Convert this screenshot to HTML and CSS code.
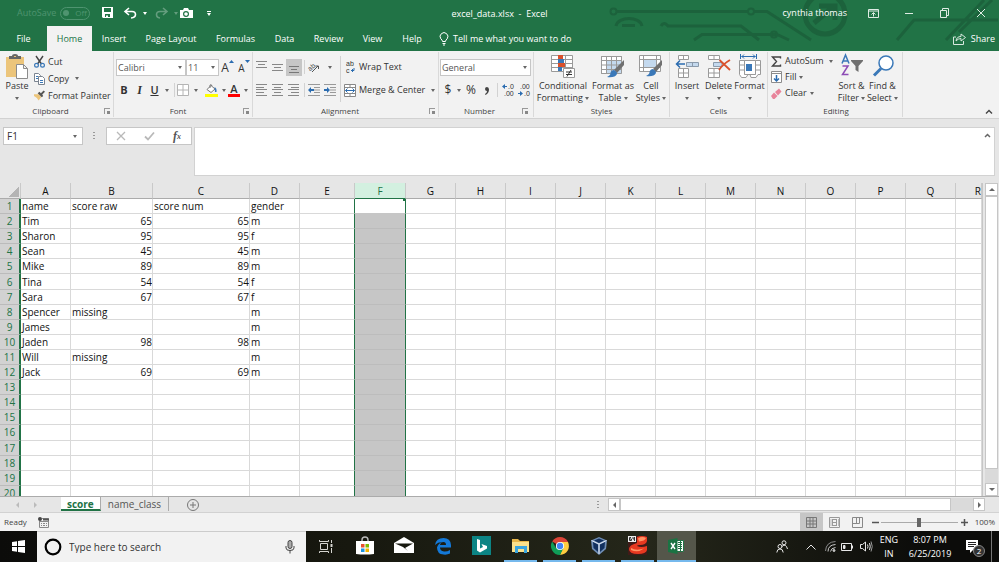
FILE: index.html
```html
<!DOCTYPE html>
<html lang="en">
<head>
<meta charset="utf-8">
<title>excel_data.xlsx - Excel</title>
<link rel="stylesheet" href="styles.css">
</head>
<body>
<div class="app">
  <header class="top">
    <svg class="circuit" width="390" height="42" viewBox="610 0 390 42" fill="none" stroke="#1a5c38" stroke-width="3">
      <circle cx="614.500" cy="11.500" r="3" stroke-width="2"/><path d="M618 11.500H749M755 11.500H768L812 40" />
      <circle cx="752" cy="11.500" r="3" stroke-width="2"/>
      <path d="M617 26C619 16 641 16 643 26M623 25.500H636"/>
      <path d="M662 26Q665 21 669 26H742L760 40M695 40L703 34.500H771L778 34.500L790 40"/>
      <circle cx="775" cy="34.500" r="3" stroke-width="2"/>
      <circle cx="826" cy="14" r="20" stroke-width="5"/>
      <path d="M815 23L834 7M820 6H836V20" stroke-width="5"/>
      <path d="M898 40L915 20H999M947 40L985 0M960 32L993 0"/>
    </svg>
    <div class="titlebar">
      <div class="quick">
        <span class="autosave">AutoSave</span>
        <button class="toggle" aria-label="AutoSave off"><i></i>Off</button>
        <button class="save" aria-label="Save"><svg width="12" height="12" viewBox="0 0 12 12"><path fill="#fff" fill-rule="evenodd" d="M0 0H11V11H1L0 10ZM2 1V5H9V1ZM3 7V10H4V8.500H6V10H8V7Z"/></svg></button>
        <button class="undo" aria-label="Undo"><svg width="13" height="12" viewBox="0 0 13 12" fill="none" stroke="#fff" stroke-width="1.600"><path d="M5 1L1 4.500L5 8M1.500 4.500H8Q11.500 4.500 11.500 7.500Q11.500 10.500 7 11"/></svg></button>
        <i class="caret light"></i>
        <button class="undo dim" aria-label="Redo"><svg width="13" height="12" viewBox="0 0 13 12" fill="none" stroke="#fff" stroke-width="1.600"><path d="M8 1L12 4.500L8 8M11.500 4.500H5Q1.500 4.500 1.500 7.500Q1.500 10.500 5 11"/></svg></button>
        <i class="caret light dim"></i>
        <button class="camera" aria-label="Camera"><svg width="13" height="11" viewBox="0 0 13 11"><path fill="#fff" d="M0 2H3L4 0H8L9 2H13V10H0Z"/><circle cx="6" cy="6" r="2.400" fill="#fff" stroke="#217346" stroke-width="1.200"/></svg></button>
        <button class="more" aria-label="Customize toolbar"><i class="caret light"></i></button>
      </div>
      <div class="title">excel_data.xlsx&nbsp; - &nbsp;Excel</div>
      <div class="window">
        <span>cynthia thomas</span>
        <button aria-label="Ribbon display options"><svg width="11" height="10" viewBox="0 0 11 10" fill="none" stroke="#dfece4"><path d="M.5 1.500H10.500V9.500H.5ZM.5 3H10.500M5.500 8.500V5M3.500 6.500L5.500 4.500L7.500 6.500"/></svg></button>
        <button aria-label="Minimize"><svg width="9" height="10" viewBox="0 0 9 10" stroke="#dfece4"><path d="M0 5.500H8"/></svg></button>
        <button aria-label="Restore"><svg width="10" height="10" viewBox="0 0 10 10" fill="none" stroke="#dfece4"><path d="M.5 2.500H6.500V9.500H.5ZM2.500 2V.5H8.500V7.500H7"/></svg></button>
        <button aria-label="Close"><svg width="10" height="10" viewBox="0 0 10 10" stroke="#dfece4"><path d="M1 1L9 9M9 1L1 9"/></svg></button>
      </div>
    </div>
    <nav class="tabs">
      <a href="#">File</a><a href="#" class="on">Home</a><a href="#">Insert</a><a href="#">Page Layout</a><a href="#">Formulas</a><a href="#">Data</a><a href="#">Review</a><a href="#">View</a><a href="#">Help</a>
      <button class="tell"><svg width="10" height="14" viewBox="0 0 10 14" fill="none" stroke="#fff"><path d="M3.500 9.500Q3.500 8 1.800 6.800A3.900 3.900 0 1 1 8.200 6.800Q6.500 8 6.500 9.500ZM3.500 11.500H6.500M4 13H6"/></svg>Tell me what you want to do</button>
      <button class="share"><svg width="13" height="13" viewBox="0 0 13 13" fill="none" stroke="#d9e9df"><path d="M3 5H.5V12.500H10.500V9M3 9Q3.500 4.500 8 4.500V2L12.500 5.500L8 9V6.500Q5 6.500 3 9Z"/></svg>Share</button>
    </nav>
  </header>

  <section class="ribbon">
    <div class="group clipboard">
      <div class="body">
        <button class="big"><svg width="24" height="26" viewBox="0 0 24 26"><path fill="#ecc57b" d="M1 3H19V23H1Z"/><path fill="#666" d="M4 2H7Q7 0 10 0Q13 0 13 2H16V5H4Z"/><path fill="#ecc57b" d="M9 2H11V3H9Z"/><path fill="#fff" stroke="#8c8c8c" d="M11.500 10.500H18.500L22.500 14.500V24.500H11.500ZM18.500 10.500V14.500H22.500"/></svg><span>Paste</span><i class="caret"></i></button>
        <div class="list">
          <button><svg width="11" height="12" viewBox="0 0 11 12" fill="none"><path stroke="#444" stroke-width="1.400" d="M2 0L7.500 8M9 0L3.500 8"/><circle cx="2.500" cy="9.300" r="1.900" stroke="#3a78b8" stroke-width="1.200"/><circle cx="8.500" cy="9.300" r="1.900" stroke="#3a78b8" stroke-width="1.200"/></svg>Cut</button>
          <button><svg width="11" height="12" viewBox="0 0 11 12" fill="#fff" stroke="#7b8490"><path d="M.5 .5H4.500L6.500 2.500V8.500H.5Z"/><path stroke="#3a78b8" d="M2 3.500H4M2 5.500H4"/><path d="M4.500 3.500H8.500L10.500 5.500V11.500H4.500Z"/><path stroke="#3a78b8" d="M6 7.500H9M6 9.500H9"/></svg>Copy<i class="caret"></i></button>
          <button><svg width="11" height="11" viewBox="0 0 12 11"><path fill="#ecc57b" d="M0 4L5 4L8 7L5 11Q4 8 0 6Z"/><path fill="#555" d="M4 3L6 1.500L7.500 3L10.500 0L12 1.500L9 4.500L10 6L8.500 7.500Z"/></svg>Format Painter</button>
        </div>
      </div>
      <footer><span>Clipboard</span><i class="launch"></i></footer>
    </div>

    <div class="group font">
      <div class="body rows">
        <div class="row r1">
          <label class="combo"><select aria-label="Font"><option>Calibri</option></select></label>
          <label class="combo"><select aria-label="Font size"><option>11</option></select></label>
          <button aria-label="Increase font size" class="grow">A<svg width="5" height="3" viewBox="0 0 5 3"><path fill="#2b6cb0" d="M0 3L2.500 0L5 3Z"/></svg></button>
          <button aria-label="Decrease font size" class="grow small">A<svg width="5" height="3" viewBox="0 0 5 3"><path fill="#2b6cb0" d="M0 0L2.500 3L5 0Z"/></svg></button>
        </div>
        <div class="row r2">
          <button class="b">B</button><button class="i">I</button><button class="u">U</button><i class="caret"></i><i class="sep"></i>
          <button aria-label="Borders"><svg width="12" height="12" viewBox="0 0 12 12" fill="#fff" stroke="#b4b4b4"><path d="M.5 .5H11.500V11.500H.5ZM6 .5V11.500M.5 6H11.500"/></svg></button><i class="caret"></i>
          <button aria-label="Fill color"><svg width="13" height="13" viewBox="0 0 13 13"><path fill="#fff" stroke="#777" d="M2 5.500L6 1.500L10 5L6 8.500Z"/><path stroke="#777" fill="none" d="M5 4V1Q6.500 0 7 2"/><path fill="#3a78b8" d="M9.500 3Q12 4 11.500 8L10 8Z"/><path fill="#ff0" d="M0 10H13V13H0Z"/></svg></button><i class="caret"></i>
          <button aria-label="Font color" class="fc">A</button><i class="caret"></i>
        </div>
      </div>
      <footer><span>Font</span><i class="launch"></i></footer>
    </div>

    <div class="group align">
      <div class="body">
        <div class="aligngrid">
          <button aria-label="Top align"><svg width="12" height="12" viewBox="0 0 12 12" stroke="#888"><path d="M0 .5H11M2 3.500H9M0 6.500H11"/></svg></button>
          <button aria-label="Middle align"><svg width="12" height="12" viewBox="0 0 12 12" stroke="#888"><path d="M0 3.500H11M2 6.500H9M0 9.500H11"/></svg></button>
          <button aria-label="Bottom align" class="sel"><svg width="12" height="12" viewBox="0 0 12 12" stroke="#777"><path d="M1 5.500H11M3 8.500H9M1 11.500H11"/></svg></button>
          <i class="sep"></i>
          <button aria-label="Orientation"><svg width="12" height="12" viewBox="0 0 12 12"><text x="0" y="9" font-size="7" font-family="Liberation Sans" fill="#444" transform="rotate(-40 3 7)">ab</text><path d="M4 11L10 5M7.500 5H10.500V8" fill="none" stroke="#555"/></svg></button>
          <i class="caret"></i>
          <button aria-label="Align left"><svg width="12" height="12" viewBox="0 0 12 12" stroke="#888"><path d="M0 .5H11M0 3.500H8M0 5.500H11M0 8.500H8M0 11.500H11"/></svg></button>
          <button aria-label="Center"><svg width="12" height="12" viewBox="0 0 12 12" stroke="#888"><path d="M0 .5H11M2 3.500H9M0 5.500H11M2 8.500H9M0 11.500H11"/></svg></button>
          <button aria-label="Align right"><svg width="12" height="12" viewBox="0 0 12 12" stroke="#888"><path d="M0 .5H11M3 3.500H11M0 5.500H11M3 8.500H11M0 11.500H11"/></svg></button>
          <i class="sep"></i>
          <button aria-label="Decrease indent"><svg width="12" height="12" viewBox="0 0 12 12"><path stroke="#999" d="M0 .5H12M6 3.500H12M6 6H12M6 8.500H12M0 11.500H12"/><path fill="#2b6cb0" d="M0 6L3 3V5H6V7H3V9Z"/></svg></button>
          <button aria-label="Increase indent"><svg width="12" height="12" viewBox="0 0 12 12"><path stroke="#999" d="M0 .5H12M6 3.500H12M6 6H12M6 8.500H12M0 11.500H12"/><path fill="#2b6cb0" d="M6 6L3 3V5H0V7H3V9Z"/></svg></button>
        </div>
        <i class="sep tall"></i>
        <div class="wraps">
          <button><svg width="12" height="14" viewBox="0 0 12 14"><text x="2" y="6" font-size="7" font-family="Liberation Sans" fill="#333">ab</text><text x="2" y="13" font-size="7" font-family="Liberation Sans" fill="#333">c</text><path fill="none" stroke="#2b6cb0" d="M10 8V10.500H7M9 9L7.500 10.500L9 12"/></svg>Wrap Text</button>
          <button><svg width="12" height="13" viewBox="0 0 12 13" fill="none" stroke="#888"><path fill="#fff" d="M.5 .5H11.500V12.500H.5ZM.5 3.500H11.500M.5 9.500H11.500M6 .5V3.500M6 9.500V12.500"/><path stroke="#2b6cb0" d="M1.500 6.500H10.500M3.500 4.500L1.500 6.500L3.500 8.500M8.500 4.500L10.500 6.500L8.500 8.500"/></svg>Merge &amp; Center<i class="caret"></i></button>
        </div>
      </div>
      <footer><span>Alignment</span><i class="launch"></i></footer>
    </div>

    <div class="group number">
      <div class="body rows">
        <div class="row"><label class="combo"><select aria-label="Number format"><option>General</option></select></label></div>
        <div class="row nr">
          <button class="sym">$</button><i class="caret"></i><button class="sym">%</button><button aria-label="Comma style"><svg width="6" height="9" viewBox="0 0 6 9"><path fill="#444" d="M1 8Q3 7 3 5Q1 5 1 3Q1 1 3 1Q5 1 5 3.500Q5 7 1.500 9Z"/></svg></button><i class="sep"></i>
          <button aria-label="Increase decimal"><svg width="13" height="14" viewBox="0 0 13 14"><path fill="#2b6cb0" d="M0 3.500L3 1V3H5V4H3V6Z"/><text x="6" y="6" font-size="7" font-family="Liberation Sans" fill="#333">.0</text><text x="2" y="13" font-size="7" font-family="Liberation Sans" fill="#333">.00</text></svg></button>
          <button aria-label="Decrease decimal"><svg width="13" height="14" viewBox="0 0 13 14"><path fill="#2b6cb0" d="M5 10.500L2 8V10H0V11H2V13Z"/><text x="2" y="6" font-size="7" font-family="Liberation Sans" fill="#333">.00</text><text x="6" y="13" font-size="7" font-family="Liberation Sans" fill="#333">.0</text></svg></button>
        </div>
      </div>
      <footer><span>Number</span><i class="launch"></i></footer>
    </div>

    <div class="group styles">
      <div class="body">
        <button class="big"><svg width="24" height="26" viewBox="0 0 24 26"><path fill="#fff" stroke="#9a9a9a" d="M.5 1.500H21.500V17.500H.5ZM.5 5.500H21.500M.5 9.500H21.500M.5 13.500H21.500M7.500 1.500V17.500M14.500 1.500V17.500"/><path fill="#d9512c" d="M7 1H12V5H7ZM7 9H14V13H7Z"/><path fill="#3a78b8" d="M7 5H13V9H7ZM7 13H11V17H7Z"/><path fill="#fff" stroke="#9a9a9a" d="M12.500 14.500H23.500V23.500H12.500Z"/><path stroke="#333" d="M15 18H21M15 20.500H21M20 16L16 22.500"/></svg><span>Conditional</span><span>Formatting <i class="caret"></i></span></button>
        <button class="big"><svg width="24" height="26" viewBox="0 0 24 26"><path fill="#fff" stroke="#9a9a9a" d="M.5 2.500H20.500V19.500H.5Z"/><path fill="#c4d9ee" d="M5 7H21V20H5Z"/><path fill="none" stroke="#9a9a9a" d="M.5 2.500H20.500V19.500H.5ZM.5 6.500H20.500M.5 11H20.500M.5 15.500H20.500M5.500 2.500V19.500M10.500 2.500V19.500M15.500 2.500V19.500"/><path fill="#707070" d="M23 6V11L16 19L13 16Z"/><path fill="#3a78b8" d="M12.500 16Q16 17 16 20Q14 24 6 23Q10 21 9.500 18.500Q10.500 16 12.500 16Z"/></svg><span>Format as</span><span>Table <i class="caret"></i></span></button>
        <button class="big"><svg width="24" height="26" viewBox="0 0 24 26"><path fill="#fff" stroke="#9a9a9a" d="M.5 1.500H21.500V17.500H.5ZM.5 5.500H21.500M.5 13.500H21.500M4.500 1.500V17.500M17.500 1.500V17.500"/><path fill="#c4d9ee" d="M5 6H17V13H5Z"/><path fill="#707070" d="M23 6V11L17 18L14 15Z"/><path fill="#3a78b8" d="M13.500 15Q17 16 17 19Q15 23 7 22Q11 20 10.500 17.500Q11.500 15 13.500 15Z"/></svg><span>Cell</span><span>Styles <i class="caret"></i></span></button>
      </div>
      <footer><span>Styles</span></footer>
    </div>

    <div class="group cells">
      <div class="body">
        <button class="big"><svg width="24" height="26" viewBox="0 0 24 26"><path fill="#fff" stroke="#9a9a9a" d="M3.500 1.500H13.500V5.500H3.500ZM8.500 1.500V5.500M3.500 14.500H13.500V23.500H3.500ZM8.500 14.500V23.500M3.500 19H13.500"/><path fill="#c4d9ee" stroke="#8a9aab" d="M11.500 8.500H23.500V12.500H11.500ZM17.500 8.500V12.500"/><path fill="none" stroke="#2b6cb0" stroke-width="1.500" d="M10 10H2M5 6.500L1.500 10L5 13.500"/></svg><span>Insert</span><i class="caret"></i></button>
        <button class="big"><svg width="24" height="26" viewBox="0 0 24 26"><path fill="#fff" stroke="#9a9a9a" d="M1.500 1.500H12.500V5.500H1.500ZM7 1.500V5.500M1.500 14.500H12.500V23.500H1.500ZM7 14.500V23.500M1.500 19H12.500"/><path fill="#c4d9ee" stroke="#8a9aab" d="M6.500 8.500H15V12.500H6.500Z"/><path fill="none" stroke="#d9512c" stroke-width="1.800" d="M12.500 6L23 16M23 6Q16 10 12 16"/></svg><span>Delete</span><i class="caret"></i></button>
        <button class="big"><svg width="24" height="26" viewBox="0 0 24 26"><path fill="#fff" stroke="#9a9a9a" d="M1.500 6.500H22.500V20.500H20L18 23.500H13L12 20.500H10L8 23.500H3.500L1.500 20.500ZM1.500 11H22.500M1.500 16H22.500M6.500 6.500V20.500M17.500 6.500V20.500"/><path fill="#fff" stroke="#9a9a9a" d="M6.500 6.500H17.500V20.500H6.500Z"/><path fill="#3a78b8" d="M8 10H14V17H8Z"/><path fill="none" stroke="#2b6cb0" d="M2.500 0V5M18.500 0V5M3.500 2.500H17.500M6 .5L4 2.500L6 4.500M15 .5L17 2.500L15 4.500"/></svg><span>Format</span><i class="caret"></i></button>
      </div>
      <footer><span>Cells</span></footer>
    </div>

    <div class="group editing">
      <div class="body">
        <div class="list">
          <button><svg width="11" height="11" viewBox="0 0 11 11" fill="none" stroke="#444" stroke-width="1.400"><path d="M9.500 2.500V1H1.500L5.500 5.500L1.500 10H9.500V8.500"/></svg>AutoSum<i class="caret far"></i></button>
          <button><svg width="11" height="12" viewBox="0 0 11 12"><path fill="#fff" stroke="#8c8c8c" d="M.5 .5H10.500V11.500H.5ZM.5 2.500H10.500"/><path fill="none" stroke="#2b6cb0" stroke-width="1.500" d="M5.500 4V10M3 7.500L5.500 10L8 7.500"/></svg>Fill<i class="caret"></i></button>
          <button><svg width="11" height="11" viewBox="0 0 11 11"><path fill="#e8839a" d="M0 8L3 4.500L6.500 8L3.500 11H2Z"/><path fill="#e8839a" d="M4 4L8 .5L10.500 3.500L7 7.500Z"/></svg>Clear<i class="caret"></i></button>
        </div>
        <button class="big"><svg width="24" height="26" viewBox="0 0 24 26" fill="none"><path stroke="#3a78b8" stroke-width="1.500" d="M2 9.500L5.500 1L9 9.500M3 7H8"/><path stroke="#8d4bb5" stroke-width="1.500" d="M2.500 12H8L2.500 20.500H8.500"/><path fill="#707070" d="M11 6H23V7L18.500 12V18L15.500 16V12L11 7Z"/></svg><span>Sort &amp;</span><span>Filter <i class="caret"></i></span></button>
        <button class="big"><svg width="24" height="26" viewBox="0 0 24 26" fill="none" stroke="#3a78b8"><circle cx="15" cy="9" r="7" fill="#fff" stroke-width="1.500"/><path stroke-width="3" d="M10 14.500L3 21.500"/></svg><span>Find &amp;</span><span>Select <i class="caret"></i></span></button>
      </div>
      <footer><span>Editing</span></footer>
    </div>
    <button class="collapse" aria-label="Collapse ribbon"><svg width="8" height="5" viewBox="0 0 8 5" fill="none" stroke="#444" stroke-width="1.400"><path d="M1 4.500L4 1.500L7 4.500"/></svg></button>
  </section>

  <section class="formula">
    <label class="namebox"><input value="F1" aria-label="Name box"><i class="caret"></i></label>
    <i class="dots"></i>
    <div class="fx">
      <button aria-label="Cancel"><svg width="10" height="10" viewBox="0 0 10 10" stroke="#b9b9b9" stroke-width="1.300"><path d="M1 1L9 9M9 1L1 9"/></svg></button>
      <button aria-label="Enter"><svg width="11" height="10" viewBox="0 0 11 10" fill="none" stroke="#b9b9b9" stroke-width="1.800"><path d="M1 5.500L4 8.500L10 1.500"/></svg></button>
      <button class="fn" aria-label="Insert function">f<sub>x</sub></button>
    </div>
    <div class="entry"><textarea aria-label="Formula"></textarea><svg width="7" height="5" viewBox="0 0 7 5" fill="none" stroke="#666" stroke-width="1.500"><path d="M1 4L3.500 1.500L6 4"/></svg></div>
  </section>

  <main class="sheet">
    <div class="gridwrap"><table id="grid"></table></div>
    <div class="vscroll">
      <button aria-label="Scroll up"><i class="tri up"></i></button><div class="thumb"></div><div class="track"></div><button aria-label="Scroll down"><i class="tri down"></i></button>
    </div>
  </main>

  <div class="sheetbar">
    <button class="nav" aria-label="Previous sheet"><i class="tri left pale"></i></button><button class="nav" aria-label="Next sheet"><i class="tri right pale"></i></button>
    <a href="#" class="sheettab on">score</a><a href="#" class="sheettab">name_class</a>
    <button class="add" aria-label="New sheet"><svg width="12" height="12" viewBox="0 0 12 12" fill="none" stroke="#777"><circle cx="6" cy="6" r="5.500"/><path d="M3 6H9M6 3V9"/></svg></button>
    <i class="dots"></i>
    <div class="hscroll"><button aria-label="Scroll left"><i class="tri left"></i></button><div class="thumb"></div><div class="track"></div><button aria-label="Scroll right"><i class="tri right"></i></button></div>
  </div>

  <div class="status">
    <span class="ready">Ready</span>
    <svg width="11" height="11" viewBox="0 0 11 11"><path fill="none" stroke="#888" d="M1.500 4V10.500H10.500V1.500H4M1.500 4.500H10.500M3 6.500H9M3 8.500H9"/><path stroke="#f2f2f2" d="M4.500 5V10M7.500 5V10"/><path stroke="#555" stroke-width="2" d="M5 2.500H11"/><circle cx="2" cy="2" r="2" fill="#444"/></svg>
    <div class="views">
      <button class="sel" aria-label="Normal"><svg width="11" height="11" viewBox="0 0 11 11" fill="none" stroke="#777"><path d="M.5 .5H10.500V10.500H.5ZM.5 4H10.500M.5 7H10.500M4 .5V10.500M7 .5V10.500"/></svg></button>
      <button aria-label="Page layout"><svg width="11" height="11" viewBox="0 0 11 11" fill="none" stroke="#999"><path d="M.5 .5H10.500V10.500H.5ZM3.500 2V9M7.500 2V9M4 2.500H7M4 5.500H7M4 8.500H7"/><path stroke="#bbb" d="M2 2V9M9.500 2V9"/></svg></button>
      <button aria-label="Page break preview"><svg width="11" height="11" viewBox="0 0 11 11" fill="none" stroke="#888"><path d="M.5 .5H10.500V10.500H.5ZM.5 6.500H7.500V.5M4.500 .5V6.500"/></svg></button>
    </div>
    <button class="zoom" aria-label="Zoom out"><svg width="7" height="7" viewBox="0 0 7 7" stroke="#555" stroke-width="1.500"><path d="M0 3.500H7"/></svg></button>
    <input type="range" aria-label="Zoom" min="0" max="100" value="50">
    <button class="zoom" aria-label="Zoom in"><svg width="7" height="7" viewBox="0 0 7 7" stroke="#555" stroke-width="1.500"><path d="M0 3.500H7M3.500 0V7"/></svg></button>
    <span class="pct">100%</span>
  </div>

  <footer class="taskbar">
    <button class="start" aria-label="Start"><svg width="13" height="13" viewBox="0 0 13 13" fill="#fff"><path d="M0 2L5 1.200V6H0ZM6 1L13 0V6H6ZM0 7H5V11.800L0 11ZM6 7H13V13L6 12Z"/></svg></button>
    <label class="search">
      <svg width="18" height="18" viewBox="0 0 18 18" fill="none" stroke="#000" stroke-width="2.200"><circle cx="9" cy="9" r="7.300"/></svg>
      <input placeholder="Type here to search" aria-label="Search">
      <svg width="10" height="14" viewBox="0 0 10 14" fill="none" stroke="#444"><rect x="3" y=".5" width="4" height="8" rx="2" fill="#aaa"/><path d="M1 6V8Q1 10.500 5 10.500Q9 10.500 9 8V6M5 10.500V13.500"/></svg>
    </label>
    <div class="apps">
      <button aria-label="Task view"><svg width="14" height="14" viewBox="0 0 14 14" fill="none" stroke="#d5d5d0"><path d="M1.500 4.500H8.500V10.500H1.500ZM.5 1V2.500H9.500V1M.5 14V12.500H9.500V14M12.500 1V4M12.500 9V14"/><path stroke-width="2" d="M12.500 5V8"/></svg></button>
      <button aria-label="Store"><svg width="20" height="20" viewBox="0 0 20 20"><path fill="none" stroke="#bbb" stroke-width="1.400" d="M7 7V4Q7 1 10 1Q13 1 13 4V7"/><path fill="#fff" d="M1 5H19V18Q10 19 1 18Z"/><path fill="#e8502e" d="M6 8H9.500V11.500H6Z"/><path fill="#7fba00" d="M10.500 8H14V11.500H10.500Z"/><path fill="#1c94e0" d="M6 12.500H9.500V16H6Z"/><path fill="#f5b400" d="M10.500 12.500H14V16H10.500Z"/></svg></button>
      <button aria-label="Mail"><svg width="20" height="20" viewBox="0 0 20 20"><path fill="#fff" d="M0 7L10 1L20 7V17H0Z"/><path fill="#17180f" d="M1 7.500L19 7.500L11 12L14 15L9 11Z"/></svg></button>
      <button aria-label="Edge"><svg width="18" height="18" viewBox="0 0 18 18"><path fill="#1479d8" d="M1 8Q2 1 9.500 1Q16.500 1 17 8V10.500H6Q6 14 10 14.500Q13 14.800 16 13V16.500Q13 18 9.500 17.500Q3 17 3 10.500Q4 6.500 8 5Q4 5 1 8ZM6 8H12Q12 5 9.500 5Q6.500 5 6 8Z"/></svg></button>
      <button aria-label="Bing"><svg width="19" height="19" viewBox="0 0 19 19"><path fill="#0c8484" d="M0 0H19V19H0Z"/><path fill="#fff" d="M5 3L8 4V12.500L11 11L9.500 8L15 10V12.500L8 16.500L5 14.500Z"/></svg></button>
      <button class="run" aria-label="File Explorer"><svg width="18" height="16" viewBox="0 0 18 16"><path fill="#e8b64a" d="M0 1H6L8 3H17V14H0Z"/><path fill="#fbe08b" d="M0 4H17V14H0Z"/><path fill="#3aa5de" d="M3 8H15V15H12V11H6V15H3Z"/></svg></button>
      <button class="run" aria-label="Chrome"><svg width="18" height="18" viewBox="0 0 18 18"><path fill="#db4437" d="M9 9L1.200 4.500A9 9 0 0 1 16.800 4.500L17 5Z"/><path fill="#ffcd40" d="M9 5H17A9 9 0 0 1 9 18L12 10Z"/><path fill="#0f9d58" d="M1.200 4.500A9 9 0 0 0 9 18L12.500 11L5 11Z"/><circle cx="9" cy="9" r="4.100" fill="#fff"/><circle cx="9" cy="9" r="3.200" fill="#4285f4"/></svg></button>
      <button class="run" aria-label="VirtualBox"><svg width="18" height="18" viewBox="0 0 18 18"><path fill="#6f8db5" d="M9 0L17 3.500L16 12L9 18L2 12L1 3.500Z"/><path fill="#12305e" d="M3 5L8 7.500V15L3.500 11ZM15 5L10 7.500V15L14.500 11ZM9 1.500L14 3.500L9 6L4 3.500Z"/><path fill="none" stroke="#e4ebf5" d="M1.500 3.500L9 7L16.500 3.500M9 7V17"/></svg></button>
      <button class="run" aria-label="Terminal"><svg width="19" height="19" viewBox="0 0 19 19"><path fill="#401b18" d="M0 0H19V19H0Z"/><path fill="#e73920" d="M9 1Q14 -1 19 1V5Q18 9 12 9Q9 9 9 10Q13 12 19 10V14Q18 18 10 18Q1 18 1 13Q1 9 9 7Z"/><path fill="#ff9364" d="M10 2.500Q14 0 18 2Q17 5 11 5.500ZM3 12Q8 15 16 12.500Q10 17 3 14Z"/><path fill="#eee" d="M0 0H8V6H0Z"/><path stroke="#333" fill="none" d="M3 1.500H1.500V4.500H3.500V3H2M5 1V3H7M6.500 1V5"/></svg></button>
      <button class="run active" aria-label="Excel"><svg width="17" height="16" viewBox="0 0 17 16"><path fill="#fff" stroke="#217346" d="M8.500 2.500H15.500V13.500H8.500Z"/><path stroke="#217346" d="M10 4.500H14M10 6.500H14M10 8.500H14M10 10.500H14M12.500 3V13"/><path fill="#1a7343" d="M0 2L9.500 0V16L0 14Z"/><path stroke="#fff" stroke-width="1.400" d="M3 5L7 11M7 5L3 11"/></svg></button>
    </div>
    <div class="tray">
      <button aria-label="People"><svg width="12" height="13" viewBox="0 0 12 13" fill="none" stroke="#e8e8e8"><circle cx="8" cy="2.800" r="2"/><path d="M5.500 7Q8 3.500 10.500 6.500L11.500 9"/><circle cx="4" cy="6.500" r="2"/><path d="M.8 12.500Q1 9 4 9Q7 9 7.200 12.500"/></svg></button>
      <button aria-label="Show hidden icons"><svg width="10" height="6" viewBox="0 0 10 6" fill="none" stroke="#e8e8e8"><path d="M.5 5.500L5 1L9.500 5.500"/></svg></button>
      <button aria-label="Network"><svg width="11" height="11" viewBox="0 0 11 11" fill="none" stroke="#ccc"><path stroke="#888" d="M.5 10Q1 1 10.500 .5"/><path d="M3 10.500Q3 4 10.500 3.500M5.500 10.500Q6 7 10.500 6.500"/><circle cx="9" cy="9.500" r="1" fill="#ccc"/></svg></button>
      <button aria-label="Battery"><svg width="12" height="8" viewBox="0 0 12 8" fill="none" stroke="#e8e8e8"><path d="M.5 .5H10.500V7.500H.5ZM11.500 2.500V5.500"/><path fill="#e8e8e8" d="M2.500 2.500H4V5.500H2.500Z"/></svg></button>
      <button aria-label="Volume"><svg width="13" height="11" viewBox="0 0 13 11" fill="none" stroke="#e8e8e8"><path d="M.5 3.500H2.500L5.500 1V10L2.500 7.500H.5Z"/><path d="M7.500 3.500Q8.500 5.500 7.500 7.500M9.500 2Q11 5.500 9.500 9"/><path stroke="#999" d="M11 .5Q13.500 5.500 11 10.500"/></svg></button>
      <div class="two lang"><span>ENG</span><span>IN</span></div>
      <div class="two clock"><span>8:07 PM</span><span>6/25/2019</span></div>
      <button class="note" aria-label="Notifications"><svg width="13" height="13" viewBox="0 0 13 13"><path fill="#fff" d="M0 0H12V10H7L4 13V10H0Z"/><path stroke="#222" d="M2 2.500H10M2 4.500H10M2 6.500H8"/></svg><b>2</b></button>
      <i class="peek"></i>
    </div>
  </footer>
</div>
<script src="grid.js"></script>
</body>
</html>
```
FILE: grid.js
```js
const columns = "ABCDEFGHIJKLMNOPQR".split("");
const data = [
  ["name", "score raw", "score num", "gender"],
  ["Tim", 65, 65, "m"], ["Sharon", 95, 95, "f"], ["Sean", 45, 45, "m"],
  ["Mike", 89, 89, "m"], ["Tina", 54, 54, "f"], ["Sara", 67, 67, "f"],
  ["Spencer", "missing", "", "m"], ["James", "", "", "m"], ["Jaden", 98, 98, "m"],
  ["Will", "missing", "", "m"], ["Jack", 69, 69, "m"]
];
const selected = 5;
const cls = (i) => (i === selected ? "picked" : i === selected - 1 ? "before" : "");
let html = "<colgroup><col class='rh'>" + columns.map((c) => `<col class="c${c}">`).join("") + "</colgroup>";
html += "<thead><tr><th class='corner'></th>" + columns.map((c, i) => `<th class="${cls(i)}">${c}</th>`).join("") + "</tr></thead><tbody>";
for (let r = 0; r < 20; r++) {
  html += `<tr><th>${r + 1}</th>` + columns.map((c, i) => {
    const v = (data[r] || [])[i] ?? "";
    return `<td class="${cls(i)}${typeof v === "number" ? " num" : ""}">${v}</td>`;
  }).join("") + "</tr>";
}
document.getElementById("grid").innerHTML = html + "</tbody>";
```
FILE: styles.css
```css
* { box-sizing: border-box; }
html, body { margin: 0; height: 100%; }
body { font: 9px/12px "Open Sans", "Noto Sans", sans-serif; color: #333; background: #e6e6e6; overflow: hidden; }
button { font: inherit; color: inherit; background: none; border: 0; padding: 0; margin: 0; display: flex; align-items: center; justify-content: center; white-space: nowrap; }
a { color: inherit; text-decoration: none; }
input, select, textarea { font: inherit; color: inherit; margin: 0; border-radius: 0; outline: 0; }
svg { display: block; flex: none; overflow: visible; }
i { font-style: normal; flex: none; }
.app { height: 100vh; min-height: 500px; display: flex; flex-direction: column; }

.caret { display: inline-block; width: 0; height: 0; border: 2px solid transparent; border-top: 3px solid #666; border-bottom: 0; vertical-align: middle; justify-self: center; align-self: center; }
.caret.light { border-top-color: #fff; }
.dim { opacity: .3; }
.sep { width: 1px; height: 14px; background: #d2d2d2; align-self: center; justify-self: center; }

.top { position: relative; background: #217346; color: #fff; flex: none; }
.circuit { position: absolute; right: 0; top: 0; opacity: .7; overflow: hidden; }
.titlebar { position: relative; height: 26px; display: grid; grid-template-columns: 1fr auto 1fr; align-items: center; }
.quick { display: flex; align-items: center; padding-left: 17px; }
.autosave { width: 43px; color: #4f9470; }
.toggle { width: 30px; height: 13px; border: 1px solid #4f9470; border-radius: 7px; color: #4f9470; font-size: 8px; gap: 6px; margin-right: 12px; }
.toggle i { width: 6px; height: 6px; border-radius: 3px; background: #4f9470; }
.save { margin-right: 10px; }
.undo { margin-right: 6px; }
.quick > .caret { margin-right: 8px; }
.camera { margin-left: -6px; }
.more { margin-left: 14px; border-top: 1px solid #fff; padding-top: 1px; }
.title { padding-top: 1px; }
.window { display: flex; align-items: center; justify-content: flex-end; }
.window span { margin-right: 8px; }
.window button { width: 36px; height: 26px; }
.tabs { position: relative; display: grid; height: 25px; grid-template-columns: 47px 45px 44px 70px 59px 39px 49px 39px 40px auto 1fr; }
.tabs a { display: flex; align-items: center; justify-content: center; white-space: nowrap; }
.tabs .on { background: #f2f2f2; color: #217346; }
.tell { gap: 4px; padding-left: 7px; }
.share { gap: 5px; justify-self: end; padding-right: 4px; }

.ribbon { display: flex; background: #f2f2f2; height: 68px; flex: none; border-bottom: 1px solid #d2d2d2; padding-top: 1px; }
.group { display: flex; flex-direction: column; border-right: 1px solid #d9d9d9; flex: none; margin-bottom: 1px; }
.body { flex: 1; display: flex; align-items: flex-start; }
.group footer { display: flex; align-items: center; height: 12px; font-size: 8px; color: #444; }
.group footer span { flex: 1; text-align: center; }
.launch { width: 6px; height: 6px; border-left: 1px solid #999; border-top: 1px solid #999; margin: 0 3px; background: linear-gradient(#888, #888) 100% 100% / 3px 3px no-repeat; }
.big { flex-direction: column; justify-content: flex-start; padding-top: 2px; }
.big > .caret { margin-top: 5px; }
.list button { justify-content: flex-start; gap: 3px; }
.clipboard { width: 114px; }
.clipboard .big { width: 34px; }
.clipboard .list { padding-top: 1px; }
.clipboard .list button { height: 17px; }
.clipboard .list .caret { margin-left: 3px; }
.font { width: 139px; padding-left: 2px; }
.rows { flex-direction: column; padding-top: 7px; gap: 7px; align-items: stretch; }
.row { display: grid; height: 16px; align-items: center; }
.r1 { grid-template-columns: 70px 33px 17px 16px; }
.r2 { grid-template-columns: 16px 15px 15px 10px 4px 14px 12px 18px 7px 14px 9px; }
.combo { position: relative; display: block; height: 17px; }
.combo select { appearance: none; width: 100%; height: 17px; border: 1px solid #c6c6c6; background: #fff; padding: 0 1px; color: #555; display: block; }
.combo::after { content: ""; position: absolute; right: 4px; top: 7px; border: 2px solid transparent; border-top: 3px solid #666; border-bottom: 0; }
.grow { font-size: 12px; align-items: flex-start; line-height: 16px; }
.grow.small { font-size: 10px; }
.b { font-weight: 700; font-size: 11px; }
.i { font: italic 700 12px "Liberation Serif", serif; }
.u { font-weight: 600; font-size: 11px; text-decoration: underline; }
.r2 .fc { font-size: 11px; font-weight: 600; line-height: 10px; border-bottom: 3px solid #f00; height: 13px; width: 12px; justify-self: center; }
.align { width: 186px; padding-left: 1px; }
.aligngrid { display: grid; grid-template-columns: 16px 16px 16px 4px 16px 16px; grid-auto-rows: 16px; row-gap: 7px; padding-top: 7px; }
.aligngrid button, .aligngrid .caret { align-self: center; }
.aligngrid .sel { background: #c6c6c6; height: 17px; }
.sep.tall { height: 46px; margin: 4px 3px 0 2px; align-self: flex-start; }
.wraps { padding-top: 7px; }
.wraps button { height: 16px; gap: 3px; margin-bottom: 7px; }
.wraps .caret { margin-left: 3px; }
.number { width: 95px; padding: 0 2px 0 1px; }
.nr { grid-template-columns: 16px 6px 18px 14px 6px 16px 16px; }
.sym { font-size: 12px; }
.styles { width: 136px; }
.styles .body { display: grid; grid-template-columns: 58px 42px 34px; }
.cells { width: 98px; }
.cells .body { display: grid; grid-template-columns: 34px 29px 33px; }
.editing { width: 135px; padding-left: 3px; padding-right: 1px; }
.editing .list { padding-top: 1px; width: 65px; }
.editing .list button { height: 16px; }
.editing .far { margin-left: 2px; }
.editing .big { width: 31px; }
.collapse { margin-left: auto; align-self: flex-end; padding: 0 6px 4px 0; }

.formula { display: flex; align-items: flex-start; padding: 8px 4px 8px 3px; height: 64px; flex: none; }
.namebox { display: flex; width: 80px; height: 18px; background: #fff; border: 1px solid #c6c6c6; padding-right: 5px; }
.namebox input { border: 0; width: 100%; min-width: 0; padding: 0 3px; background: none; font-size: 10px; }
.dots { width: 2px; height: 9px; background: repeating-linear-gradient(#999 0 1px, transparent 1px 3px); }
.formula .dots { margin: 5px 11px 0 10px; }
.fx { display: grid; grid-template-columns: 28px 28px 28px; width: 86px; height: 18px; background: #fff; border: 1px solid #c6c6c6; margin-right: 2px; }
.fn { font: italic 700 12px "Liberation Serif", serif; color: #555; }
.fn sub { font-size: 8px; }
.entry { flex: 1; position: relative; height: 49px; }
.entry textarea { display: block; width: 100%; height: 100%; border: 1px solid #d2d2d2; background: #fff; resize: none; }
.entry svg { position: absolute; right: 4px; top: 6px; }

.sheet { flex: 1; min-height: 0; display: flex; }
.gridwrap { flex: 1; overflow: hidden; background: #fff; border-right: 1px solid #c6c6c6; }
table { table-layout: fixed; width: 100%; height: 318px; border-spacing: 0; font: 10px/12px "Open Sans", "Noto Sans", sans-serif; color: #111; }
.rh { width: 21px; }
col { width: 50px; }
.cB { width: 82px; }
.cC { width: 97px; }
.cE { width: 55px; }
.cF { width: 51px; }
.cR { width: auto; }
th, td { padding: 0 1px; overflow: hidden; white-space: nowrap; height: 15px; }
td { border-right: 1px solid #d9d9d9; border-bottom: 1px solid #d9d9d9; text-align: left; }
.num { text-align: right; padding-right: 0; }
th { font-weight: 400; background: #e6e6e6; }
thead th { height: 16px; border-right: 1px solid #c9c9c9; border-bottom: 1px solid #ababab; padding-top: 1px; }
thead th:last-child { text-align: right; padding-right: 0; }
thead .picked { background: #d3f0e0; color: #217346; border-bottom: 1px solid #217346; }
.corner { background: linear-gradient(135deg, transparent 50%, #b4b4b4 50%) 8px 3px / 11px 11px no-repeat #e6e6e6; }
tbody th { background: #d2d2d2; color: #217346; border-right: 2px solid #217346; border-bottom: 1px solid #bbb; padding: 0; }
td.before { border-right-color: #217346; }
td.picked { background: #c6c6c6; border-bottom-color: #bcbcbc; border-right-color: #217346; }
tr:first-child td.picked { background: linear-gradient(#217346, #217346) 100% 0 / 2px 2px no-repeat #fff; border-bottom-color: #c6c6c6; }
.vscroll { width: 16px; padding: 0 1px 0 2px; display: flex; flex-direction: column; }
.vscroll button { height: 13px; background: #fff; border: 1px solid #c6c6c6; }
.vscroll .thumb { flex: 20; background: #fff; border: 1px solid #c6c6c6; }
.vscroll .track { flex: 1; background: #dadada; }
.tri { width: 0; height: 0; border: 3px solid transparent; }
.up { border-bottom-color: #666; border-top: 0; }
.down { border-top-color: #666; border-bottom: 0; }
.left { border-right-color: #666; border-left: 0; }
.right { border-left-color: #666; border-right: 0; }
.left.pale { border-right-color: #bbb; }
.right.pale { border-left-color: #bbb; }

.sheetbar { display: flex; height: 17px; flex: none; border-top: 1px solid #ababab; border-bottom: 1px solid #d2d2d2; align-items: stretch; padding-left: 8px; }
.nav { width: 18px; }
.sheettab { font-size: 10px; line-height: 15px; padding: 0 7px; color: #555; border-right: 1px solid #ababab; margin-bottom: 1px; }
.sheettab.on { background: #fff; color: #217346; font-weight: 700; padding: 0 6px; border-bottom: 2px solid #217346; margin-left: 17px; line-height: 14px; }
.add { margin-left: 18px; }
.sheetbar .dots { margin: 4px 9px 0 auto; }
.hscroll { display: flex; width: 377px; margin-right: 14px; padding: 1px 0; }
.hscroll button { width: 12px; background: #fff; border: 1px solid #c6c6c6; }
.hscroll .thumb { flex: 15; background: #fff; border: 1px solid #c6c6c6; }
.hscroll .track { flex: 1; background: #dadada; }

.status { display: flex; height: 18px; flex: none; background: #f2f2f2; align-items: center; padding: 0 4px; font-size: 8px; color: #444; }
.ready { width: 34px; }
.views { margin-left: auto; margin-right: 3px; display: grid; grid-template-columns: 23px 23px 23px; height: 18px; }
.views .sel { background: #c6c6c6; }
.status input { appearance: none; width: 77px; height: 10px; margin: 0 3px 0 2px; background: linear-gradient(#aaa, #aaa) 0 50% / 100% 1px no-repeat; }
.status input::-webkit-slider-thumb { appearance: none; width: 4px; height: 9px; background: #666; }
.pct { margin-left: 7px; }

.taskbar { display: flex; height: 31px; flex: none; background: linear-gradient(90deg, #0c0c0a, #17180f 35%, #25271a 65%, #0c0c0a 92%); color: #fff; }
.start { width: 37px; }
.search { display: flex; align-items: center; width: 269px; background: #f2f2f2; border-top: 1px solid #ccc; padding: 0 11px 0 7px; gap: 7px; }
.search input { flex: 1; min-width: 0; border: 0; background: none; padding: 0; font-size: 10px; }
.search input::placeholder { color: #333; opacity: 1; }
.apps { display: flex; }
.apps button { width: 37px; margin: 0 1px; border-bottom: 2px solid transparent; }
.apps .run { width: 33px; margin: 0 3px; border-bottom-color: #76b9ed; }
.apps .active { width: 39px; margin: 0; background: #54564a; }
.tray { margin-left: auto; display: grid; grid-template-columns: 34px 24px 14px 20px 18px 28px 54px 34px 8px; align-items: center; font-size: 9px; }
.two { display: flex; flex-direction: column; align-items: center; line-height: 14px; }
.note { position: relative; justify-content: flex-start; padding-left: 9px; }
.note b { position: absolute; left: 16px; top: 5px; width: 12px; height: 12px; border-radius: 6px; background: #333; border: 1px solid #888; font: 8px/10px "Open Sans", sans-serif; text-align: center; }
.peek { width: 1px; height: 31px; background: #777; }
```
